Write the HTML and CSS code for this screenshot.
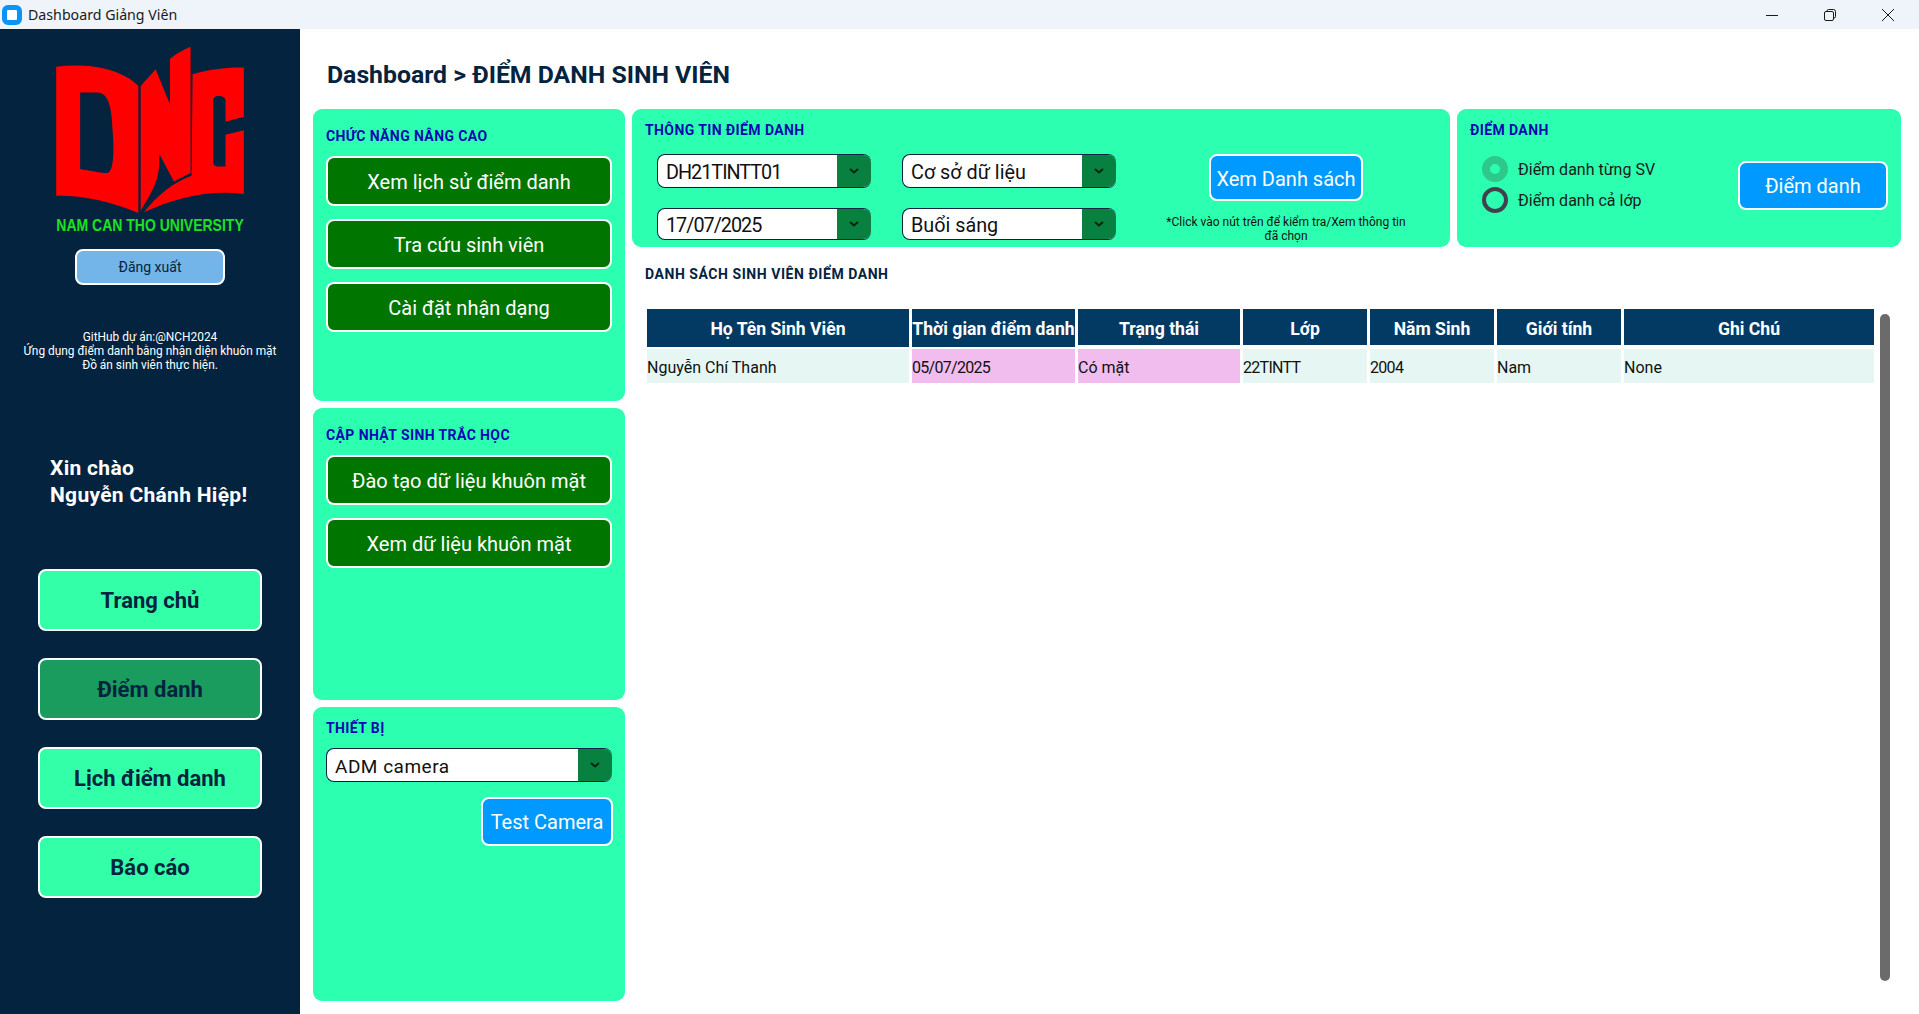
FILE: index.html
```html
<!DOCTYPE html>
<html lang="vi">
<head>
    <meta charset="UTF-8">
    <title>Dashboard Giảng Viên</title>
    <link rel="stylesheet" href="styles.css">
</head>
<body>
    <header class="titlebar">
        <span class="app-icon"></span>
        <span class="app-name">Dashboard Giảng Viên</span>
        <div class="win-controls">
            <svg width="12" height="12" viewBox="0 0 12 12"><path d="M0 6.5H12" stroke="#1a1a1a" fill="none"/></svg>
            <svg width="12" height="12" viewBox="0 0 12 12"><path d="M.5 4a1.500 1.500 0 0 1 1.500-1.500h6a1.500 1.500 0 0 1 1.500 1.500v6a1.500 1.500 0 0 1-1.500 1.500h-6a1.500 1.500 0 0 1-1.500-1.500zM3 2.500v-.5a1.500 1.500 0 0 1 1.500-1.500h5a2 2 0 0 1 2 2v5a1.500 1.500 0 0 1-1.500 1.500" stroke="#1a1a1a" fill="none"/></svg>
            <svg width="12" height="12" viewBox="0 0 12 12"><path d="M0 0L12 12M12 0L0 12" stroke="#1a1a1a" fill="none"/></svg>
        </div>
    </header>

    <div class="app">
        <aside class="sidebar">
            <svg class="logo" viewBox="48 30 564 505" width="188" height="168">
                <path fill="#ff0000" d="M48 92C140 82 240 95 295 150V532C210 495 120 478 48 480ZM120 170V400C150 405 180 412 200 412C222 412 222 340 218 290C215 210 205 170 170 170Z" fill-rule="evenodd"/>
                <path fill="#ff0000" d="M302 150L347 100L390 205V68C410 52 430 42 452 32V412L402 437L358 355C360 420 350 450 302 525Z"/>
                <path fill="#ff0000" d="M458 115C510 100 560 95 612 95V243L557 258V195C557 185 550 180 535 180C525 180 520 185 520 195V378C520 388 525 392 535 392H557V297L612 283V475C510 462 410 485 312 530C350 480 400 440 455 420Z"/>
            </svg>
            <div class="logo-text">NAM CAN THO UNIVERSITY</div>
            <button class="logout">Đăng xuất</button>
            <p class="about">GitHub dự án:@NCH2024<br>Ứng dụng điểm danh bằng nhận diện khuôn mặt<br>Đồ án sinh viên thực hiện.</p>
            <p class="greeting">Xin chào<br>Nguyễn Chánh Hiệp!</p>
            <nav class="nav">
                <button class="nav-btn">Trang chủ</button>
                <button class="nav-btn active">Điểm danh</button>
                <button class="nav-btn">Lịch điểm danh</button>
                <button class="nav-btn">Báo cáo</button>
            </nav>
        </aside>

        <main class="content">
            <h1 class="page-title">Dashboard &gt; ĐIỂM DANH SINH VIÊN</h1>
            <div class="columns">
                <div class="left-col">
                    <section class="panel tools">
                        <h2 class="panel-title">CHỨC NĂNG NÂNG CAO</h2>
                        <button class="green-btn">Xem lịch sử điểm danh</button>
                        <button class="green-btn">Tra cứu sinh viên</button>
                        <button class="green-btn">Cài đặt nhận dạng</button>
                    </section>
                    <section class="panel bio">
                        <h2 class="panel-title">CẬP NHẬT SINH TRẮC HỌC</h2>
                        <button class="green-btn">Đào tạo dữ liệu khuôn mặt</button>
                        <button class="green-btn">Xem dữ liệu khuôn mặt</button>
                    </section>
                    <section class="panel device">
                        <h2 class="panel-title">THIẾT BỊ</h2>
                        <div class="combo wide">
                            <span class="combo-text">ADM camera</span>
                            <span class="combo-arrow"><svg width="10" height="6" viewBox="0 0 10 6"><path d="M1 1L5 4.500L9 1" stroke="#06230f" stroke-width="2" fill="none"/></svg></span>
                        </div>
                        <button class="blue-btn test-btn">Test Camera</button>
                    </section>
                </div>

                <div class="right-col">
                    <div class="top-row">
                        <section class="panel info">
                            <h2 class="panel-title">THÔNG TIN ĐIỂM DANH</h2>
                            <div class="info-body">
                                <div class="combos">
                                    <div class="combo">
                                        <span class="combo-text tight">DH21TINTT01</span>
                                        <span class="combo-arrow"><svg width="10" height="6" viewBox="0 0 10 6"><path d="M1 1L5 4.500L9 1" stroke="#06230f" stroke-width="2" fill="none"/></svg></span>
                                    </div>
                                    <div class="combo">
                                        <span class="combo-text">Cơ sở dữ liệu</span>
                                        <span class="combo-arrow"><svg width="10" height="6" viewBox="0 0 10 6"><path d="M1 1L5 4.500L9 1" stroke="#06230f" stroke-width="2" fill="none"/></svg></span>
                                    </div>
                                    <div class="combo low">
                                        <span class="combo-text tight">17/07/2025</span>
                                        <span class="combo-arrow"><svg width="10" height="6" viewBox="0 0 10 6"><path d="M1 1L5 4.500L9 1" stroke="#06230f" stroke-width="2" fill="none"/></svg></span>
                                    </div>
                                    <div class="combo low">
                                        <span class="combo-text">Buổi sáng</span>
                                        <span class="combo-arrow"><svg width="10" height="6" viewBox="0 0 10 6"><path d="M1 1L5 4.500L9 1" stroke="#06230f" stroke-width="2" fill="none"/></svg></span>
                                    </div>
                                </div>
                                <div class="list-action">
                                    <button class="blue-btn list-btn">Xem Danh sách</button>
                                    <p class="note">*Click vào nút trên để kiểm tra/Xem thông tin<br>đã chọn</p>
                                </div>
                            </div>
                        </section>
                        <section class="panel attend">
                            <h2 class="panel-title">ĐIỂM DANH</h2>
                            <div class="attend-body">
                                <div class="radios">
                                    <label class="radio-row"><span class="radio checked"></span>Điểm danh từng SV</label>
                                    <label class="radio-row"><span class="radio"></span>Điểm danh cả lớp</label>
                                </div>
                                <button class="blue-btn attend-btn">Điểm danh</button>
                            </div>
                        </section>
                    </div>

                    <h2 class="list-title">DANH SÁCH SINH VIÊN ĐIỂM DANH</h2>
                    <div class="table-wrap">
                        <table class="att-table">
                            <colgroup>
                                <col class="c-name"><col class="c-time"><col class="c-status"><col class="c-small"><col class="c-small"><col class="c-small"><col class="c-note">
                            </colgroup>
                            <thead>
                                <tr>
                                    <th class="tall">Họ Tên Sinh Viên</th>
                                    <th class="tall">Thời gian điểm danh</th>
                                    <th>Trạng thái</th>
                                    <th>Lớp</th>
                                    <th>Năm Sinh</th>
                                    <th>Giới tính</th>
                                    <th>Ghi Chú</th>
                                </tr>
                            </thead>
                            <tbody>
                                <tr>
                                    <td>Nguyễn Chí Thanh</td>
                                    <td class="pink num">05/07/2025</td>
                                    <td class="pink">Có mặt</td>
                                    <td class="num">22TINTT</td>
                                    <td class="num">2004</td>
                                    <td>Nam</td>
                                    <td>None</td>
                                </tr>
                            </tbody>
                        </table>
                        <div class="scrollbar"></div>
                    </div>
                </div>
            </div>
        </main>
    </div>
</body>
</html>
```

FILE: styles.css
```css
* {
    box-sizing: border-box;
}

html, body {
    margin: 0;
    height: 100%;
}

body {
    font-family: Roboto, "Noto Sans", sans-serif;
    display: flex;
    flex-direction: column;
    background: #fff;
    overflow: hidden;
}

button {
    font-family: inherit;
    cursor: pointer;
}

/* window title bar */
.titlebar {
    height: 29px;
    flex: none;
    display: flex;
    align-items: center;
    padding-left: 2px;
    background: #eff3fa;
}

.app-icon {
    width: 20px;
    height: 20px;
    border-radius: 6px;
    border: 5px solid #0a95f5;
    background: #fff;
}

.app-name {
    margin-left: 6px;
    font-family: "Noto Sans", sans-serif;
    font-size: 14.2px;
    color: #1a1a1a;
}

.win-controls {
    margin-left: auto;
    display: flex;
    gap: 46px;
    padding-right: 25px;
}

.win-controls svg {
    display: block;
}

.app {
    flex: 1;
    display: flex;
    min-height: 0;
}

/* sidebar */
.sidebar {
    width: 300px;
    flex: none;
    display: flex;
    flex-direction: column;
    align-items: center;
    padding-top: 17px;
    background: #03233f;
}

.logo {
    display: block;
    flex: none;
}

.logo-text {
    height: 14px;
    margin-top: 4px;
    font-family: "Liberation Sans", sans-serif;
    font-size: 14px;
    line-height: 14px;
    font-weight: 700;
    white-space: nowrap;
    color: #1fe01f;
    transform: scaleY(1.2);
}

.logout {
    width: 150px;
    height: 36px;
    margin-top: 17px;
    border: 2px solid #fff;
    border-radius: 8px;
    background: #73b5e8;
    color: #03233f;
    font-size: 14px;
}

.about {
    margin: 45px 0 0;
    font-size: 11.9px;
    line-height: 14px;
    text-align: center;
    color: #fff;
}

.greeting {
    align-self: flex-start;
    margin: 83px 0 0 50px;
    font-size: 21px;
    line-height: 27px;
    font-weight: 700;
    letter-spacing: .3px;
    color: #fff;
}

.nav {
    display: flex;
    flex-direction: column;
    gap: 27px;
    margin-top: 60px;
}

.nav-btn {
    width: 224px;
    height: 62px;
    border: 2px solid #fff;
    border-radius: 8px;
    background: #33ffa8;
    color: #03233f;
    font-size: 22px;
    font-weight: 700;
}

.nav-btn.active {
    background: #1a9c5e;
}

/* main area */
.content {
    flex: 1;
    min-width: 0;
    padding: 0 18px 13px 13px;
    display: flex;
    flex-direction: column;
}

.page-title {
    margin: 29px 0 0 14px;
    height: 51px;
    font-size: 24.800px;
    line-height: 34px;
    font-weight: 700;
    color: #03233f;
}

.columns {
    flex: 1;
    display: flex;
    gap: 7px;
    min-height: 0;
}

.left-col {
    width: 312px;
    flex: none;
    display: flex;
    flex-direction: column;
    gap: 7px;
}

.right-col {
    flex: 1;
    min-width: 0;
    display: flex;
    flex-direction: column;
}

.top-row {
    display: flex;
    gap: 7px;
}

.panel {
    background: #2dffb1;
    border-radius: 9px;
}

.panel-title {
    margin: 0;
    font-size: 14px;
    line-height: 20px;
    font-weight: 700;
    letter-spacing: .4px;
    color: #0a0ab0;
}

.tools, .bio {
    height: 292px;
    padding: 17px 13px 0;
}

.device {
    flex: 1;
    padding: 11px 13px 0;
}

.green-btn {
    display: block;
    width: 286px;
    height: 50px;
    margin-top: 13px;
    padding: 2px 0 0;
    border: 2px solid #fff;
    border-radius: 8px;
    background: #007500;
    color: #fff;
    font-size: 20px;
}

.panel-title + .green-btn {
    margin-top: 10px;
}

.combo {
    height: 34px;
    display: flex;
    border: 1px solid #03233f;
    border-right: 0;
    border-radius: 8px;
    overflow: hidden;
    background: #fff;
}

.combo.low {
    height: 32px;
}

.combo.wide {
    width: 286px;
    margin-top: 10px;
}

.combo-text {
    flex: 1;
    padding: 2px 0 0 8px;
    font-size: 19.8px;
    line-height: 32px;
    color: #111;
}

.combo.low .combo-text {
    padding-top: 1px;
}

.combo-text.tight {
    letter-spacing: -1px;
}

.combo.wide .combo-text {
    font-size: 19px;
    letter-spacing: .5px;
}

.combo-arrow {
    width: 34px;
    flex: none;
    margin: -1px 0;
    display: flex;
    align-items: center;
    justify-content: center;
    background: #078040;
}

.blue-btn {
    border: 2px solid #fff;
    border-radius: 8px;
    background: #0099ff;
    color: #fff;
    font-size: 20px;
    padding: 0;
}

.test-btn {
    display: block;
    width: 132px;
    height: 49px;
    margin: 15px -1px 0 auto;
}

/* info panel */
.info {
    width: 818px;
    height: 138px;
    flex: none;
    padding: 11px 13px 0;
}

.info-body {
    display: flex;
    margin-top: 14px;
}

.combos {
    margin-left: 12px;
    width: 459px;
    display: grid;
    grid-template-columns: 214px 214px;
    column-gap: 31px;
    row-gap: 20px;
    align-content: start;
}

.list-action {
    width: 240px;
    margin-left: 50px;
    display: flex;
    flex-direction: column;
    align-items: center;
}

.list-btn {
    width: 154px;
    height: 47px;
    padding-top: 2px;
}

.note {
    margin: 14px 0 0;
    font-size: 12px;
    line-height: 14px;
    text-align: center;
    white-space: nowrap;
    color: #111;
}

/* attendance panel */
.attend {
    flex: 1;
    height: 138px;
    padding: 11px 13px 0;
}

.attend-body {
    display: flex;
    justify-content: space-between;
    margin-top: 16px;
}

.radios {
    margin-left: 12px;
    display: flex;
    flex-direction: column;
    gap: 5px;
}

.radio-row {
    display: flex;
    align-items: center;
    gap: 10px;
    font-size: 16px;
    color: #1a1a1a;
}

.radio {
    width: 26px;
    height: 26px;
    border: 4px solid #40414f;
    border-radius: 50%;
}

.radio.checked {
    border: 8px solid #2cc98a;
}

.attend-btn {
    width: 150px;
    height: 49px;
    margin: 5px 0 0;
}

/* student list */
.list-title {
    margin: 17px 0 0 13px;
    font-size: 14px;
    line-height: 20px;
    font-weight: 700;
    letter-spacing: .55px;
    color: #03233f;
}

.table-wrap {
    flex: 1;
    position: relative;
    margin-top: 25px;
    padding-left: 12px;
}

.att-table {
    width: 1233px;
    table-layout: fixed;
    border-collapse: separate;
    border-spacing: 3px 4px;
    margin-top: -4px;
}

.c-name {
    width: 262px;
}

.c-time {
    width: 163px;
}

.c-status {
    width: 162px;
}

.c-small {
    width: 124px;
}

.c-note {
    width: 250px;
}

.att-table th {
    height: 36px;
    padding: 4px 0 0;
    background: #023a64;
    color: #fff;
    font-size: 17.6px;
    font-weight: 700;
    white-space: nowrap;
    overflow: hidden;
}

.att-table th.tall {
    box-shadow: 0 2px 0 #023a64;
}

.att-table td {
    height: 34px;
    padding: 2px 0 0 0;
    background: #e6f7f3;
    color: #111;
    font-size: 16px;
}

.att-table td.pink {
    background: #f1bcee;
}

.att-table td.num {
    letter-spacing: -.7px;
}

.scrollbar {
    position: absolute;
    left: 1248px;
    top: 5px;
    width: 10px;
    height: 667px;
    border-radius: 5px;
    background: #6b6b6b;
}
```
